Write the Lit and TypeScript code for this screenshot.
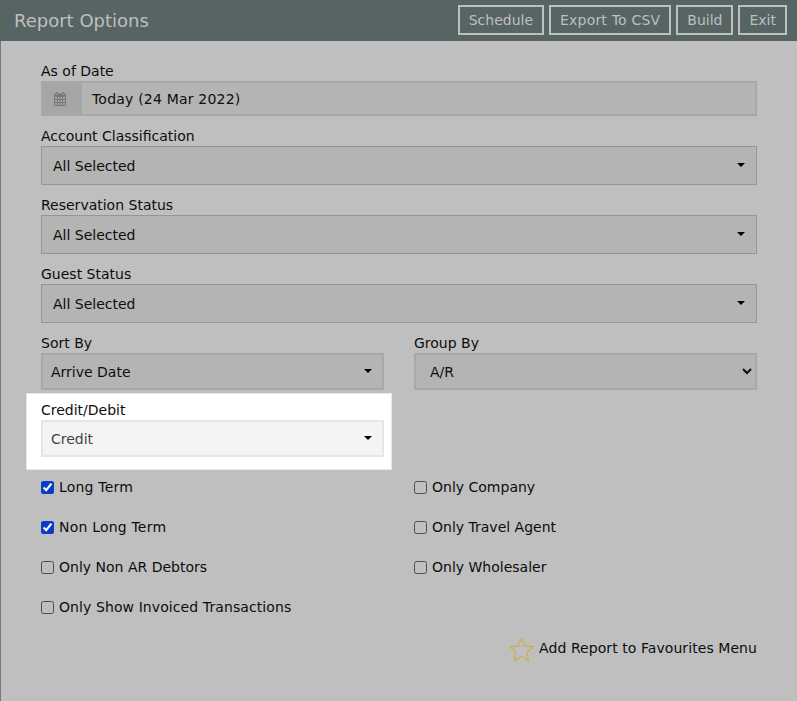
import { LitElement, html, css, svg } from "lit";
import { customElement } from "lit/decorators.js";

const caret = html`<svg class="caret" width="8" height="4" viewBox="0 0 8 4"><path d="M0 0H8L4 4Z" fill="#000"/></svg>`;
const star = svg`<path d="M13.5 2.2 L16.9 10 L25.3 10.8 L19 16.5 L20.8 24.8 L13.5 20.5 L6.2 24.8 L8 16.5 L1.7 10.8 L10.1 10 Z" fill="none" stroke="#c9b15a" stroke-width="1.4" stroke-linejoin="round"/>`;

@customElement("app-root")
export class AppRoot extends LitElement {
  static styles = css`
    :host { display: block; width: 797px; height: 701px; overflow: hidden; background: #bfbfbf; font-family: "DejaVu Sans", Verdana, sans-serif; font-size: 14px; color: #0d0d0d; }
    .panel { height: 701px; box-sizing: border-box; border-left: 1px solid #6f7c7c; }
    header { height: 41px; box-sizing: border-box; background: #566464; display: flex; align-items: center; justify-content: space-between; margin-left: -1px; padding: 0 10px 0 14px; }
    h1 { margin: 0; font-size: 18px; font-weight: normal; color: #bfbfbf; }
    .btns { display: flex; gap: 5px; margin-top: -1px; }
    button { height: 30px; box-sizing: border-box; padding: 0 9px; border: 2px solid #bfbfbf; background: transparent; color: #bfbfbf; font: inherit; font-size: 14px; }
    button.w { letter-spacing: 0.2px; padding: 0 9px; }
    form { padding: 19px 40px 0 40px; display: flex; flex-direction: column; }
    label.t { display: block; height: 21px; line-height: 23px; }
    .field { margin-bottom: 9px; }
    .date { height: 35px; box-sizing: border-box; border: 2px solid #a8a8a8; background: #b4b4b4; display: flex; align-items: center; letter-spacing: 0.2px; }
    .cal { width: 39px; height: 31px; box-sizing: border-box; padding-right: 6px; background: #a6a6a6; display: flex; align-items: center; justify-content: center; margin-right: 10px; }
    .sel { height: 39px; box-sizing: border-box; border: 1px solid #959595; background: #b4b4b4; display: flex; align-items: center; justify-content: space-between; padding: 0 11px; }
    .caret { display: block; margin-top: -1px; }
    .sel.small { height: 37px; border: 2px solid #a8a8a8; padding: 0 10px 0 8px; }
    .sel.light { background: #f4f4f4; border-color: #e6e6e6; color: #444; }
    .two { display: grid; grid-template-columns: 343px 343px; column-gap: 30px; }
    .native { display: block; width: 100%; height: 37px; box-sizing: border-box; border: 2px solid #a8a8a8; background: #b4b4b4; font: inherit; color: #0d0d0d; padding: 0 10px; border-radius: 0; outline: none; }
    .hl { background: #fff; margin: 3px 0 7px -15px; padding: 6px 8px 13px 15px; width: 343px; box-shadow: 0 0 0 1px #e8e8e8 inset; }
    .checks { display: grid; grid-template-columns: 343px 343px; column-gap: 30px; grid-auto-rows: 40px; }
    .check { display: flex; align-items: center; height: 20px; }
    .check.w { letter-spacing: 0.2px; }
    .check.n { letter-spacing: 0.09px; }
    .check input { margin: 0 5px 0 0; width: 13px; height: 13px; accent-color: #0b3cc4; }
    .check input:not(:checked) { appearance: none; box-sizing: border-box; border: 1px solid #4d4d4d; border-radius: 2.5px; background: #bfbfbf; }
    .fav { display: flex; justify-content: flex-end; align-items: center; gap: 4px; margin-top: -4px; letter-spacing: 0.07px; }
    .fav svg { display: block; margin-top: 3px; }
  `;

  private sel(label: string, value: string) {
    return html`<div class="field"><label class="t">${label}</label><div class="sel"><span>${value}</span>${caret}</div></div>`;
  }

  private check(label: string, checked = false, cls = "") {
    return html`<label class="check ${cls}"><input type="checkbox" .checked=${checked} />${label}</label>`;
  }

  render() {
    return html`<div class="panel">
      <header>
        <h1>Report Options</h1>
        <div class="btns"><button>Schedule</button><button class="w">Export To CSV</button><button>Build</button><button>Exit</button></div>
      </header>
      <form>
        <div class="field">
          <label class="t">As of Date</label>
          <div class="date">
            <div class="cal"><svg width="14" height="14" viewBox="0 0 14 14"><path fill="#777" fill-rule="evenodd" d="M3 0h1.500v2H3zM9.500 0H11v2H9.500zM1 1.500h1.500V3h2V1.500h5V3h2V1.500H13V14H1zM2 5v2h2V5zm3 0v2h1.500V5zm2.500 0v2H9V5zM10 5v2h2V5zM2 8v2h2V8zm3 0v2h1.500V8zm2.500 0v2H9V8zM10 8v2h2V8zM2 11v2h2v-2zm3 0v2h1.500v-2zm2.500 0v2H9v-2zm2.500 0v2h2v-2z"/></svg></div>
            <span>Today (24 Mar 2022)</span>
          </div>
        </div>
        ${this.sel("Account Classification", "All Selected")}
        ${this.sel("Reservation Status", "All Selected")}
        ${this.sel("Guest Status", "All Selected")}
        <div class="two">
          <div><label class="t">Sort By</label><div class="sel small"><span>Arrive Date</span>${caret}</div></div>
          <div><label class="t">Group By</label><select class="native"><option>A/R</option></select></div>
        </div>
        <div class="hl"><label class="t">Credit/Debit</label><div class="sel small light"><span>Credit</span>${caret}</div></div>
        <div class="checks">
          ${this.check("Long Term", true, "w")}${this.check("Only Company")}
          ${this.check("Non Long Term", true, "w")}${this.check("Only Travel Agent")}
          ${this.check("Only Non AR Debtors")}${this.check("Only Wholesaler")}
          ${this.check("Only Show Invoiced Transactions", false, "n")}
        </div>
        <div class="fav"><svg width="27" height="27" viewBox="0 0 27 27">${star}</svg><span>Add Report to Favourites Menu</span></div>
      </form>
    </div>`;
  }
}
